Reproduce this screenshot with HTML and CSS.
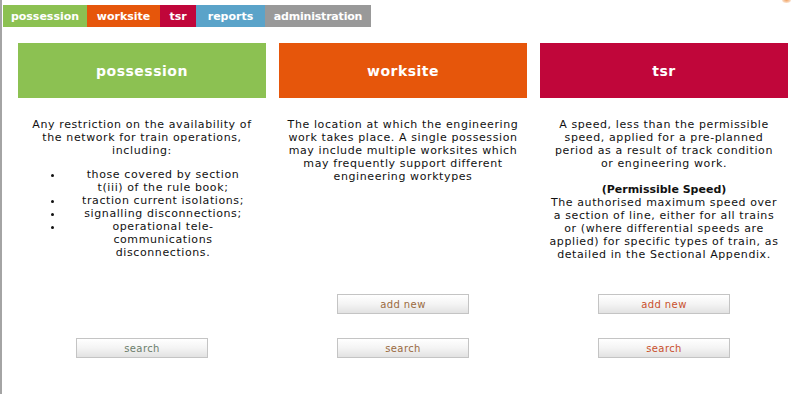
FILE: index.html
```html
<!DOCTYPE html>
<html>
<head>
<meta charset="utf-8">
<link rel="stylesheet" href="styles.css">
</head>
<body>
<span class="corner-dot"></span>
<nav class="tabs">
  <a class="tab tab-possession">possession</a>
  <a class="tab tab-worksite">worksite</a>
  <a class="tab tab-tsr">tsr</a>
  <a class="tab tab-reports">reports</a>
  <a class="tab tab-admin">administration</a>
</nav>
<main class="board">
  <div class="head head-possession">possession</div>
  <div class="head head-worksite">worksite</div>
  <div class="head head-tsr">tsr</div>

  <div class="desc">
    <p>Any restriction on the availability of the network for train operations, including:</p>
    <ul class="list">
      <li>those covered by section t(iii) of the rule book;</li>
      <li>traction current isolations;</li>
      <li>signalling disconnections;</li>
      <li>operational tele-communications disconnections.</li>
    </ul>
  </div>
  <div class="desc">
    <p>The location at which the engineering work takes place. A single possession may include multiple worksites which may frequently support different engineering worktypes</p>
  </div>
  <div class="desc">
    <p>A speed, less than the permissible speed, applied for a pre-planned period as a result of track condition<br>or engineering work.</p>
    <p class="gap"><b>(Permissible Speed)</b><br>The authorised maximum speed over a section of line, either for all trains or (where differential speeds are applied) for specific types of train, as detailed in the Sectional Appendix.</p>
  </div>

  <div class="cell cell-add"></div>
  <div class="cell cell-add"><button class="btn btn-worksite">add new</button></div>
  <div class="cell cell-add"><button class="btn btn-tsr">add new</button></div>

  <div class="cell cell-search"><button class="btn btn-possession">search</button></div>
  <div class="cell cell-search"><button class="btn btn-worksite">search</button></div>
  <div class="cell cell-search"><button class="btn btn-tsr">search</button></div>
</main>
</body>
</html>
```

FILE: styles.css
```css
html, body {
  margin: 0;
  padding: 0;
  background: #fff;
}
body {
  min-height: 394px;
  box-sizing: border-box;
  border-left: 2px solid #a4a4a4;
  font-family: "DejaVu Sans", Verdana, sans-serif;
  font-size: 11px;
  color: #111;
  position: relative;
}
.corner-dot {
  position: absolute;
  left: 780px;
  top: -3px;
  width: 9px;
  height: 6px;
  border-radius: 50%;
  background: radial-gradient(#f0a060, rgba(255,200,150,0));
}
.tabs {
  display: flex;
  margin: 5px 0 0 1px;
  height: 22px;
}
.tab {
  display: flex;
  align-items: center;
  justify-content: center;
  color: #fff;
  font-weight: bold;
  font-size: 11px;
  white-space: nowrap;
}
.tab-possession { background: #8cc152; width: 84px; }
.tab-worksite { background: #e6560b; width: 73px; }
.tab-tsr { background: #c0063a; width: 36px; }
.tab-reports { background: #5aa3c9; width: 69px; }
.tab-admin { background: #999; width: 106px; letter-spacing: -0.2px; }

.board {
  display: grid;
  grid-template-columns: 248px 248px 248px;
  column-gap: 13px;
  margin: 16px 0 0 16px;
}
.head {
  height: 55px;
  display: flex;
  align-items: center;
  justify-content: center;
  color: #fff;
  font-weight: bold;
  font-size: 14px;
  letter-spacing: 0.5px;
}
.head-possession { background: #8cc152; }
.head-worksite { background: #e6560b; }
.head-tsr { background: #c0063a; }

.desc {
  padding: 20px 6px 0;
  text-align: center;
  line-height: 13px;
  letter-spacing: 0.6px;
}
.desc b { letter-spacing: 0; }
.desc p { margin: 0; }
.desc p.gap { margin-top: 13px; }
.list {
  margin: 11px 0 0;
  padding: 0 12px 0 40px;
}
.list li {
  text-align: center;
  padding-left: 14px;
}

.cell {
  display: flex;
  justify-content: center;
}
.cell-add {
  margin-top: 33px;
  height: 20px;
}
.cell-search {
  margin-top: 24px;
}
.btn {
  width: 132px;
  height: 20px;
  border: 1px solid #c4c4c4;
  background: linear-gradient(#ffffff, #f4f4f4 50%, #e2e2e2);
  font-family: "DejaVu Sans", Verdana, sans-serif;
  font-size: 10px;
  letter-spacing: 0.4px;
  padding: 0;
}
.btn-possession { color: #6b7d6b; }
.btn-worksite { color: #9a6a3e; }
.btn-tsr { color: #c9502c; }
```
